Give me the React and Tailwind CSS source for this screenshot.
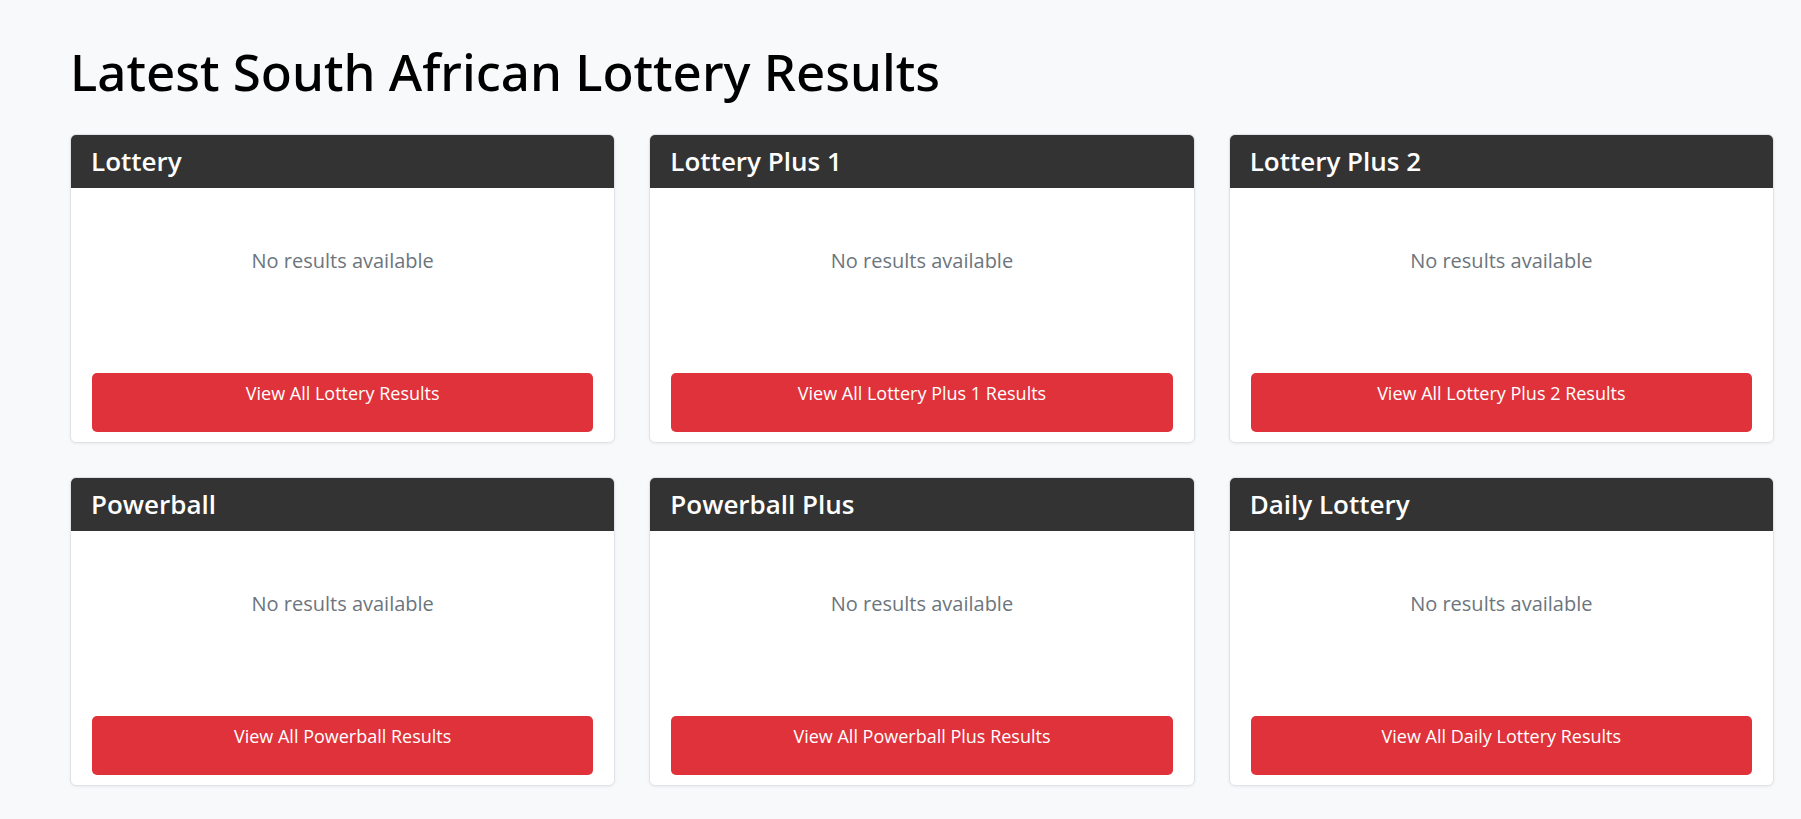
import React from "react";

const games = [
  "Lottery",
  "Lottery Plus 1",
  "Lottery Plus 2",
  "Powerball",
  "Powerball Plus",
  "Daily Lottery",
];

function Card({ name }) {
  return (
    <div className="bg-white border border-[#dfe2e6] rounded-[6px] overflow-hidden shadow-[0_1px_3px_rgba(0,0,0,0.06)]">
      <div className="h-[53px] bg-[#333333] pt-[10px] pl-[20px]">
        <h3 className="text-[26px] leading-[33px] font-semibold text-white">{name}</h3>
      </div>
      <div className="h-[254px] flex flex-col px-[21px] pt-[58px] pb-[10px]">
        <p className="text-[20px] leading-[30px] text-center text-[#6c757d]">No results available</p>
        <a className="mt-auto h-[59px] rounded-[5px] bg-[#e0323a] text-white text-[18px] leading-[24px] pt-[8px] text-center block">
          View All {name} Results
        </a>
      </div>
    </div>
  );
}

export default function App() {
  return (
    <div
      className="min-h-screen bg-[#f8f9fa] pl-[70px] pr-[27px] pt-[38px] pb-[33px]"
      style={{ fontFamily: "'Open Sans', 'Noto Sans', sans-serif" }}
    >
      <h1
        className="text-[51px] leading-[66px] font-medium text-black mb-[30px]"
        style={{ fontFamily: "'Noto Sans', 'Open Sans', sans-serif" }}
      >
        Latest South African Lottery Results
      </h1>
      <div className="grid grid-cols-3 gap-[34px]">
        {games.map((g) => (
          <Card key={g} name={g} />
        ))}
      </div>
    </div>
  );
}
